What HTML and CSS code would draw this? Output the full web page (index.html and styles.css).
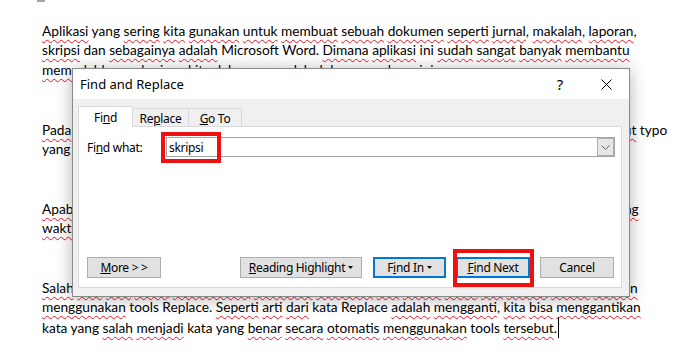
FILE: index.html
```html
<!DOCTYPE html>
<html>
<head>
<meta charset="utf-8">
<title>Find and Replace</title>
<link rel="stylesheet" href="styles.css">
</head>
<body>
<div class="page">
  <div class="mark"></div>
  <div class="doc">
    <p class="para">
      <span class="line"><span class="sp">Aplikasi</span> yang <span class="sp">sering</span> <span class="sp">kita</span> <span class="sp">gunakan</span> <span class="sp">untuk</span> <span class="sp">membuat</span> <span class="sp">sebuah</span> <span class="sp">dokumen</span> <span class="sp">seperti</span> <span class="sp">jurnal</span>, <span class="sp">makalah</span>, <span class="sp">laporan</span>,</span>
      <span class="line"><span class="sp">skripsi</span> dan <span class="sp">sebagainya</span> <span class="sp">adalah</span> Microsoft Word. <span class="sp">Dimana</span> <span class="sp">aplikasi</span> ini <span class="sp">sudah</span> <span class="sp">sangat</span> <span class="sp">banyak</span> <span class="sp">membantu</span></span>
      <span class="line"><span class="sp">memudahkan</span> <span class="sp">pekerjaan</span> <span class="sp">kita</span> <span class="sp">dalam</span> <span class="sp">mengolah</span> <span class="sp">dokumen</span> <span class="sp">selama</span> ini.</span>
    </p>
    <p class="para"><span class="line">&nbsp;</span></p>
    <p class="para">
      <span class="line"><span class="sp">Pada</span> <span class="sp">waktu</span> <span class="sp">mengetik</span> <span class="sp">dokumen</span>, <span class="sp">tentunya</span> <span class="sp">kita</span> <span class="sp">sering</span> <span class="sp">melakukan</span> <span class="sp">kesalahan</span> <span class="sp">pengetikan</span>, <span class="sp">atau</span> <span class="sp">disebut</span> typo</span>
      <span class="line">yang <span class="sp">tidak</span> <span class="sp">kita</span> <span class="sp">sadari</span>.</span>
    </p>
    <p class="para"><span class="line">&nbsp;</span></p>
    <p class="para">
      <span class="line"><span class="sp">Apabila</span> <span class="sp">kesalahan</span> <span class="sp">tersebut</span> <span class="sp">terdapat</span> di <span class="sp">banyak</span> <span class="sp">tempat</span>, <span class="sp">tentu</span> <span class="sp">akan</span> <span class="sp">amat</span> <span class="sp">merepotkan</span> <span class="sp">dan</span> <span class="sp">membuang</span></span>
      <span class="line"><span class="sp">waktu</span> <span class="sp">jika</span> <span class="sp">harus</span> <span class="sp">diperbaiki</span> <span class="sp">satu</span> per <span class="sp">satu</span>.</span>
    </p>
    <p class="para"><span class="line">&nbsp;</span></p>
    <p class="para">
      <span class="line"><span class="sp">Salah</span> <span class="sp">satu</span> <span class="sp">cara</span> <span class="sp">untuk</span> <span class="sp">memperbaiki</span> <span class="sp">kesalahan</span> <span class="sp">penulisan</span> <span class="sp">tadi</span> <span class="sp">secara</span> <span class="sp">cepat</span> <span class="sp">dan</span> <span class="sp">mudah</span> <span class="sp">adalah</span> <span class="sp">dengan</span></span>
      <span class="line"><span class="sp">menggunakan</span> tools Replace. <span class="sp">Seperti</span> <span class="sp">arti</span> <span class="sp">dari</span> kata Replace <span class="sp">adalah</span> <span class="sp">mengganti</span>, <span class="sp">kita</span> <span class="sp">bisa</span> <span class="sp">menggantikan</span></span>
      <span class="line">kata yang <span class="sp">salah</span> <span class="sp">menjadi</span> kata yang <span class="sp">benar</span> <span class="sp">secara</span> <span class="sp">otomatis</span> <span class="sp">menggunakan</span> tools <span class="sp">tersebut</span>.<span class="cursor"></span></span>
    </p>
  </div>

  <div class="dialog">
    <div class="titlebar">
      <span class="title">Find and Replace</span>
      <span class="tbtn help">?</span>
      <span class="tbtn close">
        <svg width="11" height="11" viewBox="0 0 11 11"><path d="M0.5 0.5 L10.5 10.5 M10.5 0.5 L0.5 10.5" stroke="#000" stroke-width="1" fill="none"/></svg>
      </span>
    </div>
    <div class="dbody">
      <div class="tabs">
        <span class="tab active">Fi<u>n</u>d</span>
        <span class="tab t-replace">Re<u>p</u>lace</span>
        <span class="tab t-goto"><u>G</u>o To</span>
      </div>
      <div class="panel">
        <div class="findrow">
          <span class="label">Fi<u>n</u>d what:</span>
          <div class="combo">
            <span class="value">skripsi</span>
            <span class="drop">
              <svg width="9" height="5" viewBox="0 0 9 5"><path d="M0.5 0.5 L4.5 4.5 L8.5 0.5" stroke="#606060" stroke-width="1" fill="none"/></svg>
            </span>
            <span class="redbox redbox-input"></span>
          </div>
        </div>
        <div class="buttons">
          <span class="btn btn-more"><u>M</u>ore &gt; &gt;</span>
          <span class="btn btn-rh"><u>R</u>eading Highlight<svg class="caret" width="5" height="3" viewBox="0 0 5 3"><path d="M0 0 H5 L2.5 3 Z" fill="#000"/></svg></span>
          <span class="btn btn-blue btn-findin">F<u>i</u>nd In<svg class="caret" width="5" height="3" viewBox="0 0 5 3"><path d="M0 0 H5 L2.5 3 Z" fill="#000"/></svg></span>
          <span class="btn btn-blue btn-next"><u>F</u>ind Next<span class="redbox redbox-next"></span></span>
          <span class="btn btn-cancel">Cancel</span>
        </div>
      </div>
    </div>
  </div>
</div>
</body>
</html>
```

FILE: styles.css
```css
html, body {
  margin: 0;
  padding: 0;
  background: #ffffff;
}
.page {
  position: relative;
  width: 699px;
  height: 362px;
  overflow: hidden;
  background: #ffffff;
}
.mark {
  margin-left: 37px;
  width: 8px;
  height: 2px;
  background: #a6a6a6;
}
.doc {
  padding: 19px 0 0 42px;
  font-family: "Lato", "Open Sans", sans-serif;
  font-size: 13.7px;
  line-height: 19.3px;
  color: #000;
}
.para {
  margin: 0 0 10.67px 0;
}
.line {
  display: block;
  white-space: nowrap;
}
.sp {
  text-decoration: underline wavy #e81123;
  text-decoration-thickness: 1px;
  text-underline-offset: 3px;
  text-decoration-skip-ink: none;
}
.cursor {
  display: inline-block;
  width: 1px;
  height: 21px;
  background: #000;
  vertical-align: -5px;
  margin-left: 1px;
}

/* dialog */
.dialog {
  position: absolute;
  left: 72px;
  top: 68px;
  width: 558px;
  height: 229px;
  box-sizing: border-box;
  border: 1px solid #8a8a8a;
  background: #f0f0f0;
  box-shadow: 0 2px 16px rgba(0, 0, 0, 0.3);
  font-family: "Noto Sans", "Open Sans", sans-serif;
  font-size: 12px;
  letter-spacing: -0.3px;
  color: #000;
  display: flex;
  flex-direction: column;
}
.titlebar {
  height: 30px;
  background: #fff;
  display: flex;
  align-items: center;
  padding-left: 7px;
}
.title {
  flex: 1;
  font-size: 13px;
  letter-spacing: 0;
}
.tbtn {
  width: 46px;
  height: 30px;
  display: flex;
  align-items: center;
  justify-content: center;
}
.help {
  font-size: 15px;
  letter-spacing: 0;
}
.dbody {
  flex: 1;
  display: flex;
  flex-direction: column;
  padding: 7px 7px 8px 5px;
}
.tabs {
  display: flex;
  height: 20px;
  align-items: flex-end;
}
.tab {
  box-sizing: border-box;
  display: flex;
  align-items: center;
  justify-content: center;
  border: 1px solid #d9d9d9;
  border-bottom: none;
  background: #f0f0f0;
  height: 18px;
  padding-top: 1px;
}
.tab.active {
  position: relative;
  z-index: 1;
  background: #fff;
  height: 21px;
  margin-bottom: -1px;
  width: 55px;
  padding-top: 1px;
}
.t-replace {
  width: 56px;
  border-left: none;
}
.t-goto {
  width: 53px;
  border-left: none;
}
.panel {
  flex: 1;
  background: #fff;
  border: 1px solid #d9d9d9;
  display: flex;
  flex-direction: column;
  padding: 10px 7px 9px 8px;
}
.findrow {
  display: flex;
  align-items: center;
}
.label {
  width: 79px;
}
.combo {
  position: relative;
  flex: 1;
  margin-right: -1px;
  box-sizing: border-box;
  height: 20px;
  border: 1px solid #a5a5a5;
  display: flex;
  align-items: center;
}
.value {
  flex: 1;
  padding-left: 2px;
}
.drop {
  box-sizing: border-box;
  width: 17px;
  height: 18px;
  background: #e6e6e6;
  border: 1px solid #b0b0b0;
  display: flex;
  align-items: center;
  justify-content: center;
}
.redbox {
  position: absolute;
  box-sizing: border-box;
  border: 4px solid #ee1111;
  pointer-events: none;
}
.redbox-input {
  left: -6px;
  top: -6px;
  width: 60px;
  height: 31px;
}
.buttons {
  margin-top: auto;
  display: flex;
  align-items: center;
}
.btn {
  position: relative;
  box-sizing: border-box;
  height: 21px;
  background: #e1e1e1;
  border: 1px solid #adadad;
  display: flex;
  align-items: center;
  justify-content: center;
  white-space: nowrap;
}
.btn-blue {
  border: 2px solid #0078d7;
}
.btn-more {
  width: 74px;
}
.btn-rh {
  width: 122px;
  margin-left: auto;
}
.btn-findin {
  width: 73px;
  margin-left: 11px;
}
.btn-next {
  width: 74px;
  margin-left: 10px;
}
.btn-cancel {
  width: 74px;
  margin-left: 10px;
}
.caret {
  margin-left: 3px;
}
.redbox-next {
  left: -5px;
  top: -10px;
  width: 81px;
  height: 38px;
}
```
